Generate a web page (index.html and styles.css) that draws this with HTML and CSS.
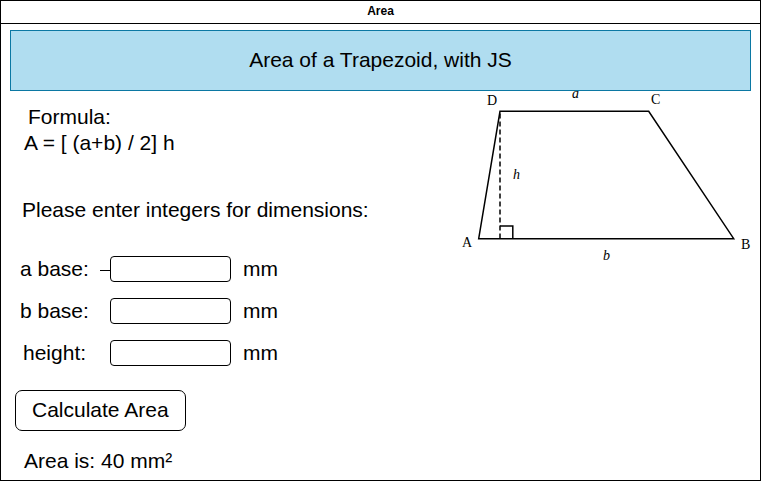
FILE: index.html
```html
<!DOCTYPE html>
<html lang="en">
<head>
<meta charset="utf-8">
<title>Area</title>
<link rel="stylesheet" href="styles.css">
</head>
<body>
<div class="window">
  <header class="titlebar">Area</header>
  <main class="page">
    <h1 class="banner">Area of a Trapezoid, with JS</h1>
    <div class="content">
      <form class="calculator">
        <p class="formula-label">Formula:</p>
        <p class="formula">A = [ (a+b) / 2] h</p>
        <p class="prompt">Please enter integers for dimensions:</p>
        <div class="fields">
          <div class="field">
            <label for="a">a base:</label>
            <span class="connector"></span>
            <input id="a" type="text" inputmode="numeric">
            <span class="unit">mm</span>
          </div>
          <div class="field">
            <label for="b">b base:</label>
            <input id="b" type="text" inputmode="numeric">
            <span class="unit">mm</span>
          </div>
          <div class="field">
            <label for="h" class="height-label">height:</label>
            <input id="h" type="text" inputmode="numeric">
            <span class="unit">mm</span>
          </div>
        </div>
        <button class="calculate" type="button">Calculate Area</button>
        <p class="result">Area is: 40 mm²</p>
      </form>
      <svg class="diagram" width="301" height="180" viewBox="450 91 301 180" role="img" aria-label="Trapezoid ABCD">
        <path class="line" d="M478.700 238.700L500 111.300H648.700L733.700 238.700Z"/>
        <path class="line dashed" d="M500 238.500V111"/>
        <path class="line" d="M500 226H512.800V238"/>
        <text x="487" y="105">D</text>
        <text x="651" y="104">C</text>
        <text x="462" y="247">A</text>
        <text x="741" y="249">B</text>
        <text class="side" x="572" y="98">a</text>
        <text class="side" x="603" y="260">b</text>
        <text class="side" x="513" y="179">h</text>
      </svg>
    </div>
  </main>
</div>
</body>
</html>
```
FILE: styles.css
```css
* {
  box-sizing: border-box;
}

body {
  margin: 0;
  padding: 0 1px 1px 0;
  background: #fff;
  color: #000;
  font: 21px/26px "Liberation Sans", Arial, sans-serif;
}

p {
  margin: 0;
}

.window {
  border: 1px solid #000;
}

.titlebar {
  padding: 1px 0 3px;
  border-bottom: 1px solid #000;
  font-size: 12px;
  line-height: 18px;
  font-weight: bold;
  text-align: center;
}

.page {
  padding: 6px 9px;
}

.banner {
  margin: 0;
  padding: 16px 16px 17px;
  border: 1px solid #0b78a3;
  background: #b0ddf0;
  font-size: 21px;
  line-height: 26px;
  font-weight: normal;
  text-align: center;
}

.content {
  display: flex;
  justify-content: space-between;
  align-items: flex-start;
}

.calculator {
  padding: 13px 0 0 5px;
}

.formula-label {
  padding-left: 13px;
}

.formula,
.result {
  padding-left: 9px;
}

.prompt {
  margin-top: 41px;
  padding-left: 7px;
}

.fields {
  display: grid;
  gap: 16px;
  margin: 33px 0 24px;
  padding-left: 5px;
}

.field {
  position: relative;
  display: grid;
  grid-template-columns: 78px 121px auto;
  column-gap: 12px;
}

.field input {
  width: 121px;
  height: 26px;
  padding: 0 6px;
  border: 1px solid #000;
  border-radius: 4px;
  background: #fff;
  font: inherit;
}

.height-label {
  padding-left: 3px;
}

.connector {
  position: absolute;
  top: 14px;
  left: 80px;
  width: 10px;
  border-top: 1px solid #000;
}

.calculate {
  display: block;
  padding: 6px 16px 7px;
  border: 1px solid #000;
  border-radius: 7px;
  background: #fff;
  color: #000;
  font: inherit;
}

.result {
  margin-top: 17px;
}

.diagram {
  flex: none;
  overflow: hidden;
  font: 14px "Liberation Serif", "Times New Roman", serif;
}

.line {
  fill: none;
  stroke: #000;
  stroke-width: 1.5;
}

.dashed {
  stroke-dasharray: 5 3;
}

.side {
  font-style: italic;
}
```
